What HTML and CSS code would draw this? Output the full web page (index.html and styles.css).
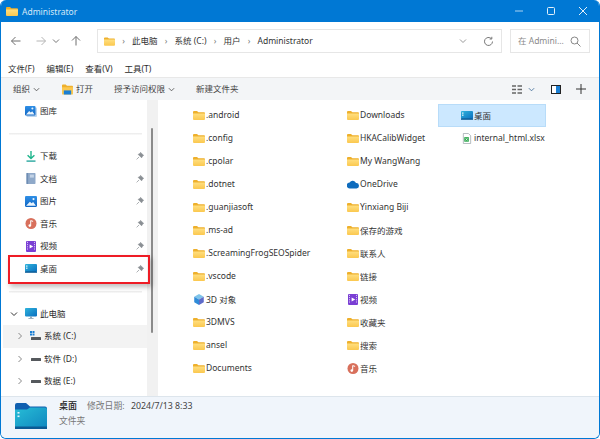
FILE: index.html
```html
<!DOCTYPE html>
<html lang="zh-CN">
<head>
    <meta charset="UTF-8">
    <title>Administrator</title>
    <link rel="stylesheet" href="styles.css">
</head>
<body>
    <svg class="defs" width="0" height="0">
        <defs>
            <linearGradient id="fold" x1="0" y1="0" x2="0" y2="1"><stop offset="0" stop-color="#ffdf80"/><stop offset="1" stop-color="#fbc84f"/></linearGradient>
            <linearGradient id="desk" x1="0" y1="0" x2="1" y2="1"><stop offset="0" stop-color="#2fb4dc"/><stop offset="1" stop-color="#0a6fc0"/></linearGradient>
            <linearGradient id="bigdesk" x1="0" y1="0" x2="1" y2="1"><stop offset="0" stop-color="#27bdd6"/><stop offset="1" stop-color="#0f86bf"/></linearGradient>
            <linearGradient id="pic" x1="0" y1="0" x2="0" y2="1"><stop offset="0" stop-color="#2f8fe6"/><stop offset="1" stop-color="#0f66c4"/></linearGradient>
            <symbol id="folder" viewBox="0 0 12 9">
                <path d="M0 1a1 1 0 0 1 1-1h3l1.400 1.300H11a1 1 0 0 1 1 1V3H0z" fill="#eeb02c"/>
                <path d="M0 2.400h12V8a1 1 0 0 1-1 1H1a1 1 0 0 1-1-1z" fill="url(#fold)"/>
            </symbol>
            <symbol id="desktop" viewBox="0 0 12 9">
                <rect width="12" height="8" rx="1" fill="url(#desk)"/>
                <rect y="7.400" width="12" height="1.400" fill="#0b5a94"/>
                <rect x="1" y="1.500" width="1.500" height="1.200" fill="#dff3fb"/>
                <rect x="1" y="3.600" width="1.500" height="1.200" fill="#dff3fb"/>
            </symbol>
            <symbol id="pin" viewBox="0 0 8 8">
                <path d="M4.600 .4 7.600 3.400 6.600 3.900 5.600 5.800 2.200 2.400 4.100 1.400zM3 5 .6 7.400" fill="#8a8f94" stroke="#8a8f94" stroke-width=".7"/>
            </symbol>
            <symbol id="picture" viewBox="0 0 11 10">
                <rect width="11" height="10" rx="1" fill="url(#pic)"/>
                <path d="M1 9 4.500 5.200 6 6.600 7.500 5.400 10 9z" fill="#e9f4fd"/>
                <circle cx="7.800" cy="2.800" r="1" fill="#e9f4fd"/>
            </symbol>
            <symbol id="gallery" viewBox="0 0 12 11">
                <rect x="1.500" y="1.500" width="10.500" height="9.500" rx="1" fill="#bcd6ef"/>
                <rect width="10.500" height="9.500" rx="1" fill="url(#pic)"/>
                <path d="M1 8.600 4.200 5 5.800 6.400 7.200 5.200 9.600 8.600z" fill="#e9f4fd"/>
                <circle cx="7.400" cy="2.600" r="1" fill="#e9f4fd"/>
            </symbol>
            <symbol id="download" viewBox="0 0 10 11">
                <path d="M5 0v7M1.600 4.200 5 7.600l3.400-3.400" fill="none" stroke="#1fb58c" stroke-width="1.400"/>
                <rect x="0.500" y="9.400" width="9" height="1.400" fill="#2aa7a0"/>
            </symbol>
            <symbol id="doc" viewBox="0 0 9 11">
                <rect width="9" height="11" rx=".8" fill="#8fa9c9"/>
                <rect x="0" width="1.600" height="11" fill="#6f8db3"/>
                <rect x="3.400" y="1.600" width="4" height="3" fill="#c3d3e6"/>
            </symbol>
            <symbol id="music" viewBox="0 0 11 11">
                <circle cx="5.500" cy="5.500" r="5.500" fill="#d8705c"/>
                <path d="M5.200 7.400V2.600l2.400.8" fill="none" stroke="#fff" stroke-width="1"/>
                <circle cx="4.300" cy="7.600" r="1.300" fill="#fff"/>
            </symbol>
            <symbol id="video" viewBox="0 0 10 11">
                <rect width="10" height="11" rx="1" fill="#7a3fd4"/>
                <path d="M3.600 3.400v4.200L7.200 5.500z" fill="#fff"/>
                <path d="M1 1.400h1M1 3.600h1M1 5.800h1M1 8h1M8 1.400h1M8 3.600h1M8 5.800h1M8 8h1" stroke="#e1d2f7" stroke-width="1"/>
            </symbol>
            <symbol id="pc" viewBox="0 0 12 11">
                <rect width="12" height="8.400" rx=".8" fill="url(#desk)"/>
                <path d="M5.200 8.400h1.600v1.600H5.200z" fill="#7e98ad"/>
                <path d="M3.400 10h5.200v.8H3.400z" fill="#7e98ad"/>
            </symbol>
            <symbol id="cube" viewBox="0 0 12 12">
                <path d="M6 0 11.200 3 6 6 .8 3z" fill="#7fc4ea"/>
                <path d="M.8 3 6 6v6L.8 9z" fill="#2f8bd8"/>
                <path d="M11.200 3 6 6v6l5.200-3z" fill="#5e6bc9"/>
            </symbol>
            <symbol id="cloud" viewBox="0 0 12 8">
                <path d="M3 8a3 3 0 0 1-.4-6A3.600 3.600 0 0 1 9 2.600 2.700 2.700 0 0 1 9.500 8z" fill="#0f6cbd"/>
            </symbol>
            <symbol id="xlsx" viewBox="0 0 9 12">
                <path d="M.5.5h5.500L8.500 3v8.500h-8z" fill="#fff" stroke="#9aa3a9" stroke-width=".8"/>
                <rect x="1.500" y="4.500" width="5" height="5" fill="#2fa84f"/>
                <path d="M3 5.800 5 8.200M5 5.800 3 8.200" stroke="#fff" stroke-width=".7"/>
            </symbol>
            <symbol id="openfolder" viewBox="0 0 12 11">
                <path d="M0 1a1 1 0 0 1 1-1h3l1.400 1.400H11a1 1 0 0 1 1 1V6H0z" fill="#eeb02c"/>
                <path d="M0 3h12v7a1 1 0 0 1-1 1H1a1 1 0 0 1-1-1z" fill="#fbc84f"/>
                <rect x="2" y="6.500" width="8" height="4.500" fill="#1a7fd4"/>
            </symbol>
            <symbol id="bigfolder" viewBox="0 0 32 26">
                <path d="M0 2a2 2 0 0 1 2-2h9l4 3.500h15a2 2 0 0 1 2 2V9H0z" fill="#0f5fb0"/>
                <path d="M0 6.500h12l3-2h15a2 2 0 0 1 2 2V24a2 2 0 0 1-2 2H2a2 2 0 0 1-2-2z" fill="url(#bigdesk)"/>
                <rect y="23.500" width="32" height="2.500" fill="#0b5a94"/>
                <rect x="2.500" y="9" width="2" height="1.600" fill="#dff3fb"/>
                <rect x="2.500" y="12.500" width="2" height="1.600" fill="#dff3fb"/>
            </symbol>
        </defs>
    </svg>

    <div class="window">
        <header class="titlebar">
            <svg class="title-icon"><use href="#folder"/></svg>
            <span class="title-text">Administrator</span>
            <div class="win-controls">
                <svg width="10" height="10" viewBox="0 0 10 10"><path d="M1 5h8" stroke="#a9d2f1" stroke-width="1"/></svg>
                <svg width="10" height="10" viewBox="0 0 10 10"><rect x="1.500" y="1.500" width="7" height="7" rx="1" fill="none" stroke="#e3f0fa" stroke-width="1"/></svg>
                <svg width="10" height="10" viewBox="0 0 10 10"><path d="M1 1l8 8M9 1l-8 8" stroke="#e3f0fa" stroke-width="1"/></svg>
            </div>
        </header>

        <div class="navrow">
            <div class="nav-btns">
                <svg width="12" height="12" viewBox="0 0 12 12"><path d="M10.500 6h-9M5.500 2 1.500 6l4 4" fill="none" stroke="#6f6f6f"/></svg>
                <svg class="nav-fwd" width="12" height="12" viewBox="0 0 12 12"><path d="M1.500 6h9M6.500 2l4 4-4 4" fill="none" stroke="#b5b5b5"/></svg>
                <svg class="nav-down" width="8" height="8" viewBox="0 0 8 8"><path d="M1 2.500 4 5.500 7 2.500" fill="none" stroke="#777"/></svg>
                <svg class="nav-up" width="12" height="12" viewBox="0 0 12 12"><path d="M6 10.500v-9M2 5.500l4-4 4 4" fill="none" stroke="#6f6f6f"/></svg>
            </div>
            <div class="address">
                <svg class="addr-folder"><use href="#folder"/></svg>
                <span class="crumb-sep">›</span><span class="crumb">此电脑</span>
                <span class="crumb-sep">›</span><span class="crumb">系统 (C:)</span>
                <span class="crumb-sep">›</span><span class="crumb">用户</span>
                <span class="crumb-sep">›</span><span class="crumb">Administrator</span>
                <div class="addr-tools">
                    <svg width="8" height="8" viewBox="0 0 8 8"><path d="M1 2.500 4 5.500 7 2.500" fill="none" stroke="#999"/></svg>
                    <svg width="11" height="11" viewBox="0 0 11 11"><path d="M9.500 5.500a4 4 0 1 1-1.200-2.900M8.800 .8v2.200H6.600" fill="none" stroke="#777"/></svg>
                </div>
            </div>
            <div class="search">
                <span>在 Admini...</span>
                <svg width="11" height="11" viewBox="0 0 11 11"><circle cx="4.500" cy="4.500" r="3.500" fill="none" stroke="#888"/><path d="M7 7l3.500 3.500" stroke="#888"/></svg>
            </div>
        </div>

        <nav class="menubar">
            <span>文件(F)</span><span>编辑(E)</span><span>查看(V)</span><span>工具(T)</span>
        </nav>

        <div class="cmdbar">
            <span class="cmd">组织</span>
            <svg class="cmd-chev" width="7" height="7" viewBox="0 0 8 8"><path d="M1 2.500 4 5.500 7 2.500" fill="none" stroke="#555"/></svg>
            <svg class="cmd-open"><use href="#openfolder"/></svg>
            <span class="cmd">打开</span>
            <span class="cmd cmd-share">授予访问权限</span>
            <svg class="cmd-chev" width="7" height="7" viewBox="0 0 8 8"><path d="M1 2.500 4 5.500 7 2.500" fill="none" stroke="#555"/></svg>
            <span class="cmd cmd-new">新建文件夹</span>
            <div class="cmd-right">
                <svg width="10" height="9" viewBox="0 0 10 9"><path d="M0 1h4M0 4.500h4M0 8h4M5.500 1H10M5.500 4.500H10M5.500 8H10" stroke="#666" stroke-width="1.600"/></svg>
                <svg class="view-chev" width="7" height="7" viewBox="0 0 8 8"><path d="M1 2.500 4 5.500 7 2.500" fill="none" stroke="#46709a"/></svg>
                <svg class="pane-icon" width="10" height="9" viewBox="0 0 10 9"><rect x=".5" y=".5" width="9" height="8" fill="#fff" stroke="#222"/><rect x="5" y="1" width="4" height="7" fill="#1a7fd4"/></svg>
                <svg class="plus-icon" width="10" height="10" viewBox="0 0 10 10"><path d="M5 0v10M0 5h10" stroke="#333"/></svg>
            </div>
        </div>

        <div class="body">
            <aside class="sidebar">
                <div class="side-row"><svg class="side-icon"><use href="#gallery"/></svg><span>图库</span></div>
                <div class="side-sep"></div>
                <div class="side-row"><svg class="side-icon"><use href="#download"/></svg><span>下载</span><svg class="pin"><use href="#pin"/></svg></div>
                <div class="side-row"><svg class="side-icon"><use href="#doc"/></svg><span>文档</span><svg class="pin"><use href="#pin"/></svg></div>
                <div class="side-row"><svg class="side-icon"><use href="#picture"/></svg><span>图片</span><svg class="pin"><use href="#pin"/></svg></div>
                <div class="side-row"><svg class="side-icon"><use href="#music"/></svg><span>音乐</span><svg class="pin"><use href="#pin"/></svg></div>
                <div class="side-row"><svg class="side-icon"><use href="#video"/></svg><span>视频</span><svg class="pin"><use href="#pin"/></svg></div>
                <div class="side-row"><svg class="side-icon"><use href="#desktop"/></svg><span>桌面</span><svg class="pin"><use href="#pin"/></svg></div>
                <div class="side-sep"></div>
                <div class="side-row pc-row">
                    <svg class="tree-chev" width="8" height="8" viewBox="0 0 8 8"><path d="M1 2.500 4 5.500 7 2.500" fill="none" stroke="#333"/></svg>
                    <svg class="side-icon"><use href="#pc"/></svg><span>此电脑</span>
                </div>
                <div class="side-row drive-row current">
                    <svg class="tree-chev" width="8" height="8" viewBox="0 0 8 8"><path d="M2.500 1 5.500 4 2.500 7" fill="none" stroke="#888"/></svg>
                    <svg class="drive-icon" width="11" height="10" viewBox="0 0 11 10"><rect x="0" y="0" width="2" height="2" fill="#1a7fd4"/><rect x="2.500" y="0" width="2" height="2" fill="#1a7fd4"/><rect x="0" y="2.500" width="2" height="2" fill="#1a7fd4"/><rect x="2.500" y="2.500" width="2" height="2" fill="#1a7fd4"/><rect x="1" y="6" width="10" height="3" rx=".6" fill="#55595d"/></svg>
                    <span>系统 (C:)</span>
                </div>
                <div class="side-row drive-row">
                    <svg class="tree-chev" width="8" height="8" viewBox="0 0 8 8"><path d="M2.500 1 5.500 4 2.500 7" fill="none" stroke="#888"/></svg>
                    <svg class="drive-icon" width="11" height="10" viewBox="0 0 11 10"><rect x="1" y="4" width="10" height="3" rx=".6" fill="#55595d"/></svg>
                    <span>软件 (D:)</span>
                </div>
                <div class="side-row drive-row">
                    <svg class="tree-chev" width="8" height="8" viewBox="0 0 8 8"><path d="M2.500 1 5.500 4 2.500 7" fill="none" stroke="#888"/></svg>
                    <svg class="drive-icon" width="11" height="10" viewBox="0 0 11 10"><rect x="1" y="4" width="10" height="3" rx=".6" fill="#55595d"/></svg>
                    <span>数据 (E:)</span>
                </div>
                <div class="callout"></div>
            </aside>
            <div class="scroll-track"><div class="scroll-thumb"></div></div>
            <main class="files">
                <div class="file"><svg><use href="#folder"/></svg><span>.android</span></div>
                <div class="file"><svg><use href="#folder"/></svg><span>.config</span></div>
                <div class="file"><svg><use href="#folder"/></svg><span>.cpolar</span></div>
                <div class="file"><svg><use href="#folder"/></svg><span>.dotnet</span></div>
                <div class="file"><svg><use href="#folder"/></svg><span>.guanjiasoft</span></div>
                <div class="file"><svg><use href="#folder"/></svg><span>.ms-ad</span></div>
                <div class="file"><svg><use href="#folder"/></svg><span>.ScreamingFrogSEOSpider</span></div>
                <div class="file"><svg><use href="#folder"/></svg><span>.vscode</span></div>
                <div class="file"><svg><use href="#cube"/></svg><span>3D 对象</span></div>
                <div class="file"><svg><use href="#folder"/></svg><span>3DMVS</span></div>
                <div class="file"><svg><use href="#folder"/></svg><span>ansel</span></div>
                <div class="file"><svg><use href="#folder"/></svg><span>Documents</span></div>

                <div class="file"><svg><use href="#folder"/></svg><span>Downloads</span></div>
                <div class="file"><svg><use href="#folder"/></svg><span>HKACalibWidget</span></div>
                <div class="file"><svg><use href="#folder"/></svg><span>My WangWang</span></div>
                <div class="file"><svg><use href="#cloud"/></svg><span>OneDrive</span></div>
                <div class="file"><svg><use href="#folder"/></svg><span>Yinxiang Biji</span></div>
                <div class="file"><svg><use href="#folder"/></svg><span>保存的游戏</span></div>
                <div class="file"><svg><use href="#folder"/></svg><span>联系人</span></div>
                <div class="file"><svg><use href="#folder"/></svg><span>链接</span></div>
                <div class="file"><svg><use href="#video"/></svg><span>视频</span></div>
                <div class="file"><svg><use href="#folder"/></svg><span>收藏夹</span></div>
                <div class="file"><svg><use href="#folder"/></svg><span>搜索</span></div>
                <div class="file"><svg><use href="#music"/></svg><span>音乐</span></div>

                <div class="file selected"><svg><use href="#desktop"/></svg><span>桌面</span></div>
                <div class="file"><svg><use href="#xlsx"/></svg><span>internal_html.xlsx</span></div>
            </main>
        </div>

        <footer class="status">
            <svg class="status-icon"><use href="#bigfolder"/></svg>
            <div class="status-info">
                <div class="status-top">
                    <span class="status-name">桌面</span>
                    <span class="status-label">修改日期:</span>
                    <span class="status-date">2024/7/13 8:33</span>
                </div>
                <div class="status-type">文件夹</div>
            </div>
        </footer>
    </div>
</body>
</html>
```

FILE: styles.css
```css
* {
    box-sizing: border-box;
}
html, body {
    margin: 0;
    height: 100%;
    overflow: hidden;
}
body {
    font-family: "Noto Sans", "Noto Sans CJK SC", sans-serif;
    font-size: 8.5px;
    color: #2b2b2b;
    background: #fff;
}
.defs {
    position: absolute;
}
.window {
    display: flex;
    flex-direction: column;
    width: 600px;
    height: 439px;
    border: 1px solid #0078d4;
    border-top: none;
    border-radius: 6px;
    overflow: hidden;
}
.titlebar {
    display: flex;
    align-items: center;
    height: 22px;
    flex: none;
    margin: 0 -1px;
    padding-left: 6px;
    background: #0078d4;
    color: #d5e8f7;
}
.title-icon {
    width: 12px;
    height: 9px;
}
.title-text {
    margin-left: 4px;
}
.win-controls {
    display: flex;
    gap: 22px;
    margin-left: auto;
    margin-right: 12px;
}
.navrow {
    display: flex;
    align-items: center;
    height: 38px;
    flex: none;
    padding-left: 9px;
}
.nav-btns {
    display: flex;
    align-items: center;
    width: 87px;
}
.nav-fwd {
    margin-left: 13px;
}
.nav-down {
    margin-left: 5px;
}
.nav-up {
    margin-left: 10px;
}
.address {
    display: flex;
    align-items: center;
    width: 405px;
    height: 24px;
    padding-left: 6px;
    border: 1px solid #e6e6e6;
    color: #333;
}
.addr-folder {
    width: 11px;
    height: 9px;
    flex: none;
}
.crumb-sep {
    width: 17px;
    margin-bottom: 2px;
    text-align: center;
    color: #777;
}
.crumb {
    margin-bottom: 2px;
}
.addr-tools {
    display: flex;
    align-items: center;
    gap: 16px;
    margin-left: auto;
    margin-right: 7px;
}
.search {
    display: flex;
    align-items: center;
    justify-content: space-between;
    width: 80px;
    height: 24px;
    margin-left: 8px;
    padding: 0 8px 0 7px;
    border: 1px solid #e6e6e6;
    color: #8a8a8a;
}
.search span {
    margin-bottom: 2px;
}
.menubar {
    display: flex;
    align-items: center;
    gap: 12px;
    height: 17px;
    flex: none;
    padding-left: 7px;
    padding-bottom: 2px;
}
.cmdbar {
    display: flex;
    align-items: center;
    height: 23px;
    flex: none;
    padding-left: 12px;
    background: #f3f5f7;
    border-top: 1px solid #e8e8e8;
    color: #444;
}
.cmd {
    margin-bottom: 2px;
}
.cmd-chev {
    margin-left: 3px;
}
.cmd-open {
    width: 11px;
    height: 11px;
    margin-left: 22px;
    margin-right: 3px;
}
.cmd-share {
    margin-left: 21px;
}
.cmd-new {
    margin-left: 21px;
}
.cmd-right {
    display: flex;
    align-items: center;
    margin-left: auto;
    margin-right: 13px;
}
.view-chev {
    margin-left: 6px;
}
.pane-icon {
    margin-left: 16px;
}
.plus-icon {
    margin-left: 15px;
}
.body {
    display: flex;
    flex: 1;
    min-height: 0;
}
.sidebar {
    position: relative;
    z-index: 1;
    width: 146px;
    flex: none;
    padding-left: 2px;
}
.side-row {
    display: flex;
    align-items: center;
    height: 22.5px;
    padding-left: 22px;
}
.side-row span {
    margin-bottom: 2px;
}
.side-icon {
    width: 12px;
    height: 11px;
    margin-right: 3px;
    flex: none;
}
.pin {
    width: 8px;
    height: 8px;
    margin-left: auto;
    margin-right: 3px;
}
.side-sep {
    height: 22.5px;
    margin-left: 6px;
    margin-right: 5px;
    background: linear-gradient(#eee, #eee) center / 100% 1.5px no-repeat;
}
.pc-row {
    padding-left: 7px;
}
.tree-chev {
    flex: none;
    margin-right: 7px;
}
.drive-row {
    padding-left: 13px;
}
.drive-row .tree-chev {
    margin-right: 6px;
}
.drive-icon {
    flex: none;
    margin-right: 3px;
}
.current {
    background: #f3f3f3;
}
.callout {
    position: absolute;
    left: 7px;
    top: 155px;
    width: 142px;
    height: 29px;
    border: 2px solid #ee1c25;
    box-shadow: 2px 3px 5px rgba(0, 0, 0, 0.25);
    pointer-events: none;
}
.scroll-track {
    position: relative;
    width: 11px;
    flex: none;
    background: #f1f1f1;
}
.scroll-thumb {
    position: absolute;
    left: 4px;
    top: 28px;
    width: 2px;
    height: 205px;
    border-radius: 1px;
    background: #8a8a8a;
}
.files {
    display: grid;
    grid-auto-flow: column;
    grid-template-rows: repeat(12, 23px);
    grid-template-columns: 154px 114px 108px;
    align-content: start;
    padding: 4px 0 0 12px;
    flex: 1;
}
.file {
    display: flex;
    align-items: center;
    padding-left: 23px;
    white-space: nowrap;
    color: #333;
}
.file span {
    margin-bottom: 2px;
}
.file svg {
    width: 12px;
    height: 11px;
    margin-right: 1px;
    flex: none;
}
.selected {
    background: #cce8ff;
    border: 1px solid #b8dcf9;
    padding-left: 22px;
}
.status {
    display: flex;
    height: 42px;
    flex: none;
    padding: 6px 0 0 14px;
    background: #f0f5fb;
    border-top: 1px solid #dde5ec;
    font-size: 8.8px;
}
.status-icon {
    width: 32px;
    height: 26px;
}
.status-info {
    margin-left: 12px;
    margin-top: -4px;
}
.status-top {
    display: flex;
    align-items: baseline;
}
.status-name {
    width: 28px;
    font-size: 9px;
    font-weight: 500;
    color: #222;
}
.status-label {
    width: 44px;
    color: #777;
}
.status-date {
    color: #444;
}
.status-type {
    margin-top: 2px;
    color: #777;
}
```
